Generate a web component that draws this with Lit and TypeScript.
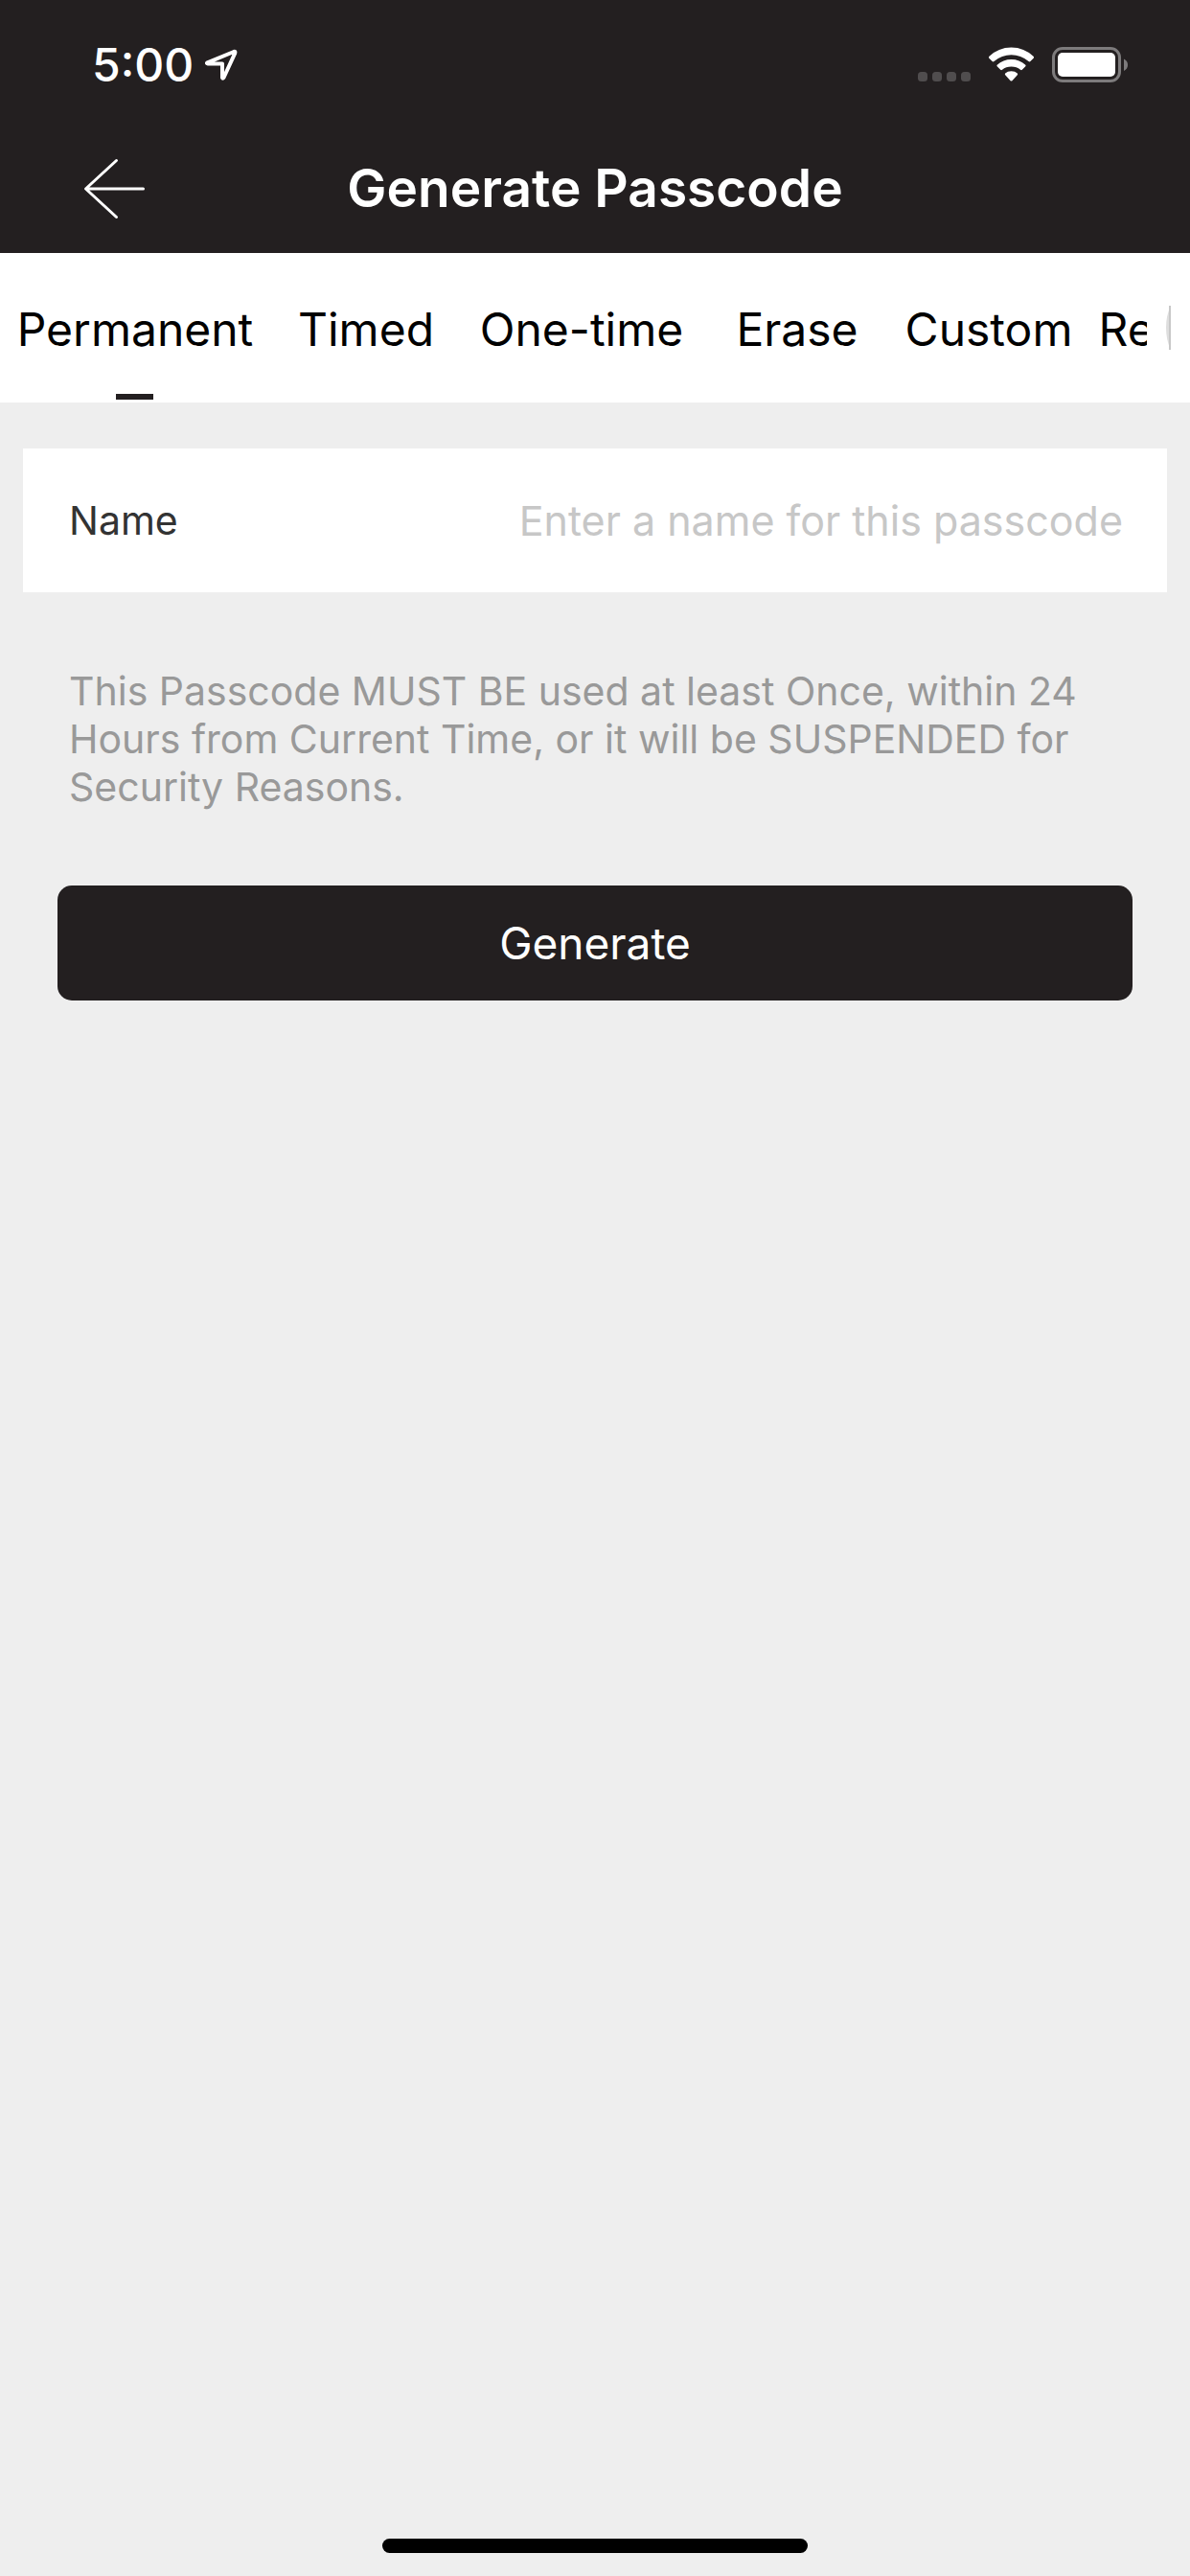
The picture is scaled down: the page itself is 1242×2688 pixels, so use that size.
import { LitElement, html, css } from "lit";
import { customElement, state } from "lit/decorators.js";
import { classMap } from "lit/directives/class-map.js";

const TABS = [
  { label: "Permanent", size: "wide" },
  { label: "Timed", size: "short" },
  { label: "One-time", size: "medium" },
  { label: "Erase", size: "short" },
  { label: "Custom", size: "short" },
  { label: "Recurring", size: "medium" },
];

@customElement("status-bar")
class StatusBar extends LitElement {
  static styles = css`
    :host {
      display: flex;
      justify-content: space-between;
      align-items: flex-start;
      height: 132px;
      box-sizing: border-box;
      padding: 40px 64px 0 96px;
      color: #fff;
    }
    .left,
    .right {
      display: flex;
      align-items: center;
      height: 56px;
    }
    .left {
      gap: 10px;
    }
    .time {
      font-size: 48px;
      line-height: 56px;
      font-weight: 500;
    }
    svg {
      display: block;
    }
    .location {
      margin-bottom: 2px;
    }
  `;

  render() {
    return html`
      <div class="left">
        <span class="time">5:00</span>
        <svg class="location" width="36" height="36" viewBox="0 0 36 36" fill="none" stroke="#fff" stroke-width="4" stroke-linejoin="round" aria-hidden="true">
          <path d="M4.500 16.300L32 5Q34 4.300 33.300 6.300L21.500 32Q20.500 33.500 20 32V17.500H5Q3 17.200 4.500 16.300Z" />
        </svg>
      </div>
      <div class="right">
        <svg width="220" height="40" viewBox="0 0 220 40" aria-hidden="true">
          <g fill="#504d4e">
            <rect x="0" y="27" width="10" height="10" rx="3.500" />
            <rect x="15" y="27" width="10" height="10" rx="3.500" />
            <rect x="30" y="27" width="10" height="10" rx="3.500" />
            <rect x="45" y="27" width="10" height="10" rx="3.500" />
          </g>
          <g fill="#fff">
            <path d="M74.200 11Q73.500 12 74.300 12.800L77.600 16Q78.600 16.800 79.500 16Q87.500 9.200 97.500 9.200T115.500 16Q116.400 16.800 117.400 16L120.700 12.800Q121.500 12 120.800 11Q111 1.500 97.500 1.500T74.200 11Z" />
            <path d="M82.700 19.700Q82 20.600 82.700 21.300L86.200 24.800Q87 25.500 88 24.800Q92 21.600 97.500 21.600T107 24.800Q108 25.500 108.800 24.800L112.300 21.300Q113 20.600 112.300 19.700Q106 14 97.500 14T82.700 19.700Z" />
            <path d="M91.200 28.600Q90.400 29.500 91.200 30.300L96.600 36.200Q97.500 37 98.400 36.200L103.800 30.300Q104.600 29.500 103.800 28.600Q101.500 26.300 97.500 26.300T91.200 28.600Z" />
          </g>
          <rect x="141.500" y="2.500" width="69" height="34" rx="9.500" fill="none" stroke="#7d7b7c" stroke-width="3" />
          <rect x="146" y="7" width="60" height="25" rx="5" fill="#fff" />
          <path d="M215 13.500Q219 15.500 219 19.700T215 26Z" fill="#7d7b7c" />
        </svg>
      </div>
    `;
  }
}

@customElement("app-root")
class AppRoot extends LitElement {
  @state() private active = 0;
  @state() private name = "";

  static styles = css`
    :host {
      display: flex;
      flex-direction: column;
      min-height: 100vh;
      background: #eee;
      font-family: Inter, "Liberation Sans", sans-serif;
    }
    button,
    input {
      margin: 0;
      border: 0;
      padding: 0;
      background: none;
      color: inherit;
      font: inherit;
    }
    .top {
      background: #231f20;
      color: #fff;
    }
    .nav {
      display: grid;
      grid-template-columns: 88px 1fr 88px;
      align-items: center;
      height: 132px;
      padding: 0 76px;
    }
    .back {
      display: flex;
      align-items: center;
      height: 88px;
    }
    .title {
      margin: 0;
      padding-bottom: 4px;
      font-size: 55px;
      line-height: 64px;
      font-weight: 600;
      text-align: center;
    }
    .tabbar {
      display: flex;
      align-items: stretch;
      height: 156px;
      padding-right: 20px;
      background: #fff;
    }
    .tabs {
      display: flex;
      flex: 1;
      min-width: 0;
      overflow: hidden;
    }
    .tab {
      flex: none;
      position: relative;
      padding-top: 3px;
      font-size: 48px;
      line-height: 60px;
      color: #000;
      text-align: center;
    }
    .wide {
      width: 282px;
    }
    .medium {
      width: 250px;
    }
    .short {
      width: 200px;
    }
    .active::after {
      content: "";
      position: absolute;
      left: calc(50% - 20px);
      bottom: 3px;
      width: 39px;
      height: 6px;
      background: #231f20;
    }
    .more {
      display: flex;
      align-items: center;
      justify-content: flex-end;
      width: 25px;
    }
    .content {
      display: flex;
      flex-direction: column;
      flex: 1;
      padding-top: 48px;
    }
    .card {
      display: flex;
      align-items: center;
      gap: 48px;
      height: 150px;
      margin: 0 24px;
      padding: 0 46px 0 48px;
      background: #fff;
    }
    .label {
      font-size: 41px;
      line-height: 50px;
      color: #333;
    }
    .field {
      flex: 1;
      min-width: 0;
      height: 100%;
      font-size: 43px;
      text-align: right;
      color: #333;
      outline: none;
    }
    .field::placeholder {
      color: #c7c7c7;
      opacity: 1;
    }
    .note {
      margin: 78px 72px 0;
      font-size: 41px;
      line-height: 50px;
      color: #999;
    }
    .generate {
      height: 120px;
      margin: 78px 60px 0;
      border-radius: 15px;
      background: #231f20;
      color: #fff;
      font-size: 46px;
      line-height: 60px;
    }
    .home {
      width: 444px;
      height: 15px;
      margin: auto auto 24px;
      border-radius: 8px;
      background: #000;
    }
  `;

  render() {
    return html`
      <header class="top">
        <status-bar></status-bar>
        <div class="nav">
          <button class="back" aria-label="Back">
            <svg width="88" height="66" viewBox="0 0 88 66" fill="none" stroke="#fff" stroke-width="3" stroke-linecap="round" stroke-linejoin="round" aria-hidden="true">
              <path d="M45.500 2.500L13.500 32L45.500 61.500M14 32H73.500" />
            </svg>
          </button>
          <h1 class="title">Generate Passcode</h1>
        </div>
      </header>
      <div class="tabbar">
        <div class="tabs" role="tablist">
          ${TABS.map(
            (tab, i) => html`<button
              role="tab"
              aria-selected=${i === this.active ? "true" : "false"}
              class=${classMap({ tab: true, [tab.size]: true, active: i === this.active })}
              @click=${() => (this.active = i)}
            >${tab.label}</button>`
          )}
        </div>
        <div class="more">
          <svg width="5" height="46" viewBox="0 0 5 46" aria-hidden="true">
            <path d="M5 0Q0 10 0 23T5 46Z" fill="#dedede" />
            <rect x="3" y="0" width="2" height="46" fill="#c8c8c8" />
          </svg>
        </div>
      </div>
      <main class="content">
        <div class="card">
          <label class="label" for="name">Name</label>
          <input
            class="field"
            id="name"
            type="text"
            placeholder="Enter a name for this passcode"
            .value=${this.name}
            @input=${(e: Event) => (this.name = (e.target as HTMLInputElement).value)}
          />
        </div>
        <p class="note">
          This Passcode MUST BE used at least Once, within 24 Hours from Current Time, or it will be SUSPENDED for
          Security Reasons.
        </p>
        <button class="generate">Generate</button>
        <div class="home"></div>
      </main>
    `;
  }
}
